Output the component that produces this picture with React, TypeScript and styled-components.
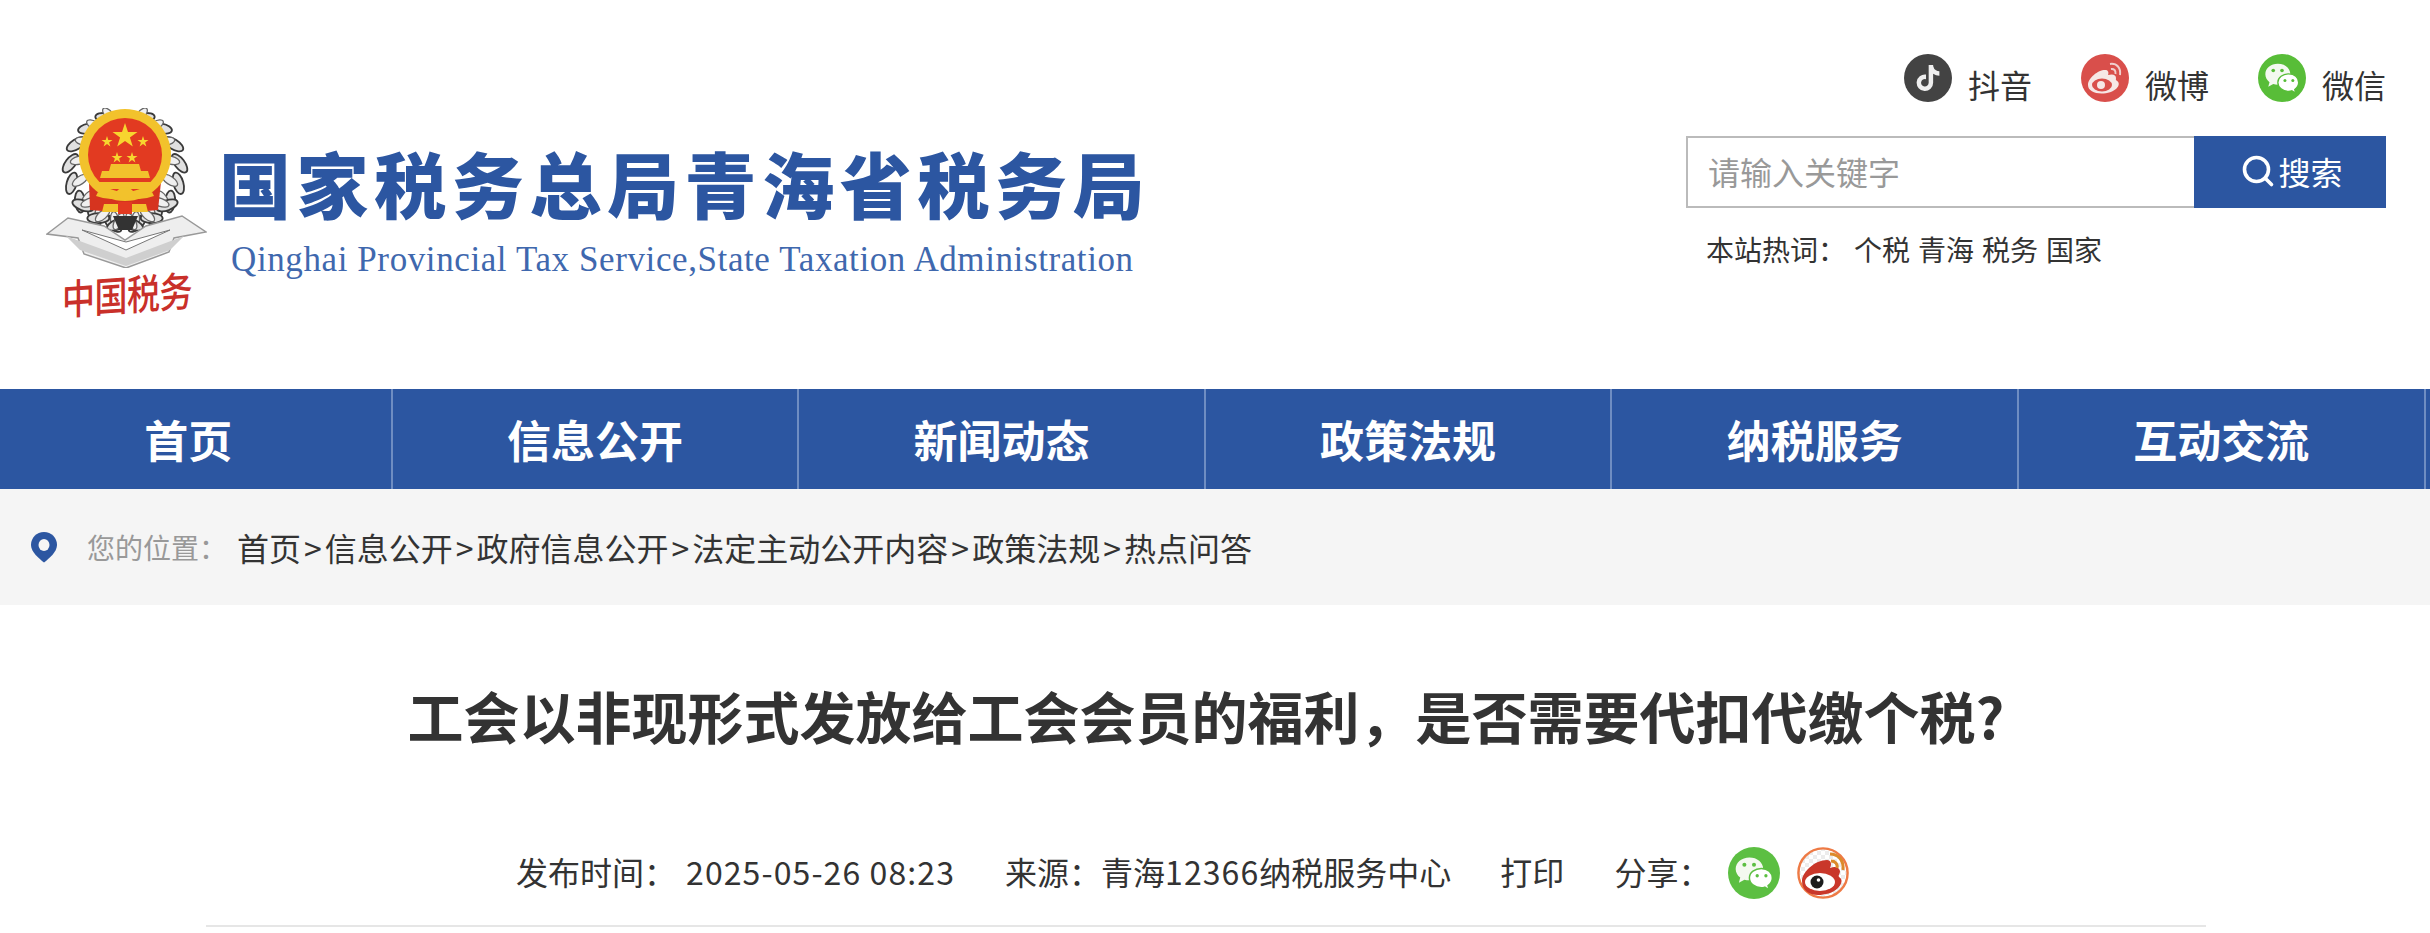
import styled, { createGlobalStyle } from 'styled-components';
import { Search } from 'lucide-react';
import { FaTiktok } from 'react-icons/fa';

const NAV = ['首页', '信息公开', '新闻动态', '政策法规', '纳税服务', '互动交流'];
const CRUMBS = ['首页', '信息公开', '政府信息公开', '法定主动公开内容', '政策法规', '热点问答'];
const HOT = ['个税', '青海', '税务', '国家'];

const GlobalStyle = createGlobalStyle`
  html, body { margin:0; padding:0; background:#fff; overflow:hidden; }
  body { font-family:"Noto Sans CJK SC","Liberation Sans",sans-serif; color:#333; }
  * { box-sizing:border-box; }
`;

const Header = styled.header`display:flex; justify-content:space-between; height:389px; padding:0 44px 0 46px;`;
const Logo = styled.div`display:flex; padding-top:108px;`;
const EmblemCol = styled.div`width:161px; display:flex; flex-direction:column; align-items:center;`;
const Slogan = styled.div`font-size:33px; line-height:50px; font-weight:500; color:#c9302a; white-space:nowrap; letter-spacing:-.5px; transform:skewY(-4deg) scaleY(1.25);`;
const LogoText = styled.div`margin-left:12px; padding-top:32px;`;
const LogoTitle = styled.div`font-size:72px; line-height:84px; font-weight:900; letter-spacing:5.6px; color:#2c56a1; white-space:nowrap;`;
const LogoEn = styled.div`margin:16px 0 0 12px; font-family:"Liberation Serif",serif; font-size:35px; line-height:40px; letter-spacing:.6px; color:#3f68ae; white-space:nowrap;`;

const Side = styled.div`width:700px; padding-top:54px;`;
const Socials = styled.div`display:flex; justify-content:flex-end; gap:49px; height:82px;`;
const Social = styled.a`display:flex; align-items:flex-start; gap:16px; font-size:32px; line-height:52px; color:#333; height:48px; span{margin-top:4px; display:block;}`;
const Round = styled.i<{ $bg: string; $fg?: string; $size?: number }>`
  width:${({ $size }) => $size ?? 48}px; height:${({ $size }) => $size ?? 48}px; border-radius:50%; flex:none;
  display:flex; align-items:center; justify-content:center; background:${({ $bg }) => $bg}; color:${({ $fg }) => $fg ?? '#eee'};
`;
const SearchBar = styled.form`display:flex; height:72px;`;
const SearchInput = styled.input`
  flex:1; min-width:0; height:72px; border:2px solid #bbb; border-right:0; padding:0 0 3px 20px; outline:0;
  font:32px "Noto Sans CJK SC",sans-serif; color:#333; &::placeholder{color:#999; opacity:1;}
`;
const SearchButton = styled.button`
  width:192px; height:72px; border:0; background:#2c56a1; color:#fff; padding:0 0 3px 3px;
  display:flex; align-items:center; justify-content:center; gap:2px; font:32px "Noto Sans CJK SC",sans-serif;
`;
const HotWords = styled.div`display:flex; margin:21px 0 0 20px; font-size:28px; line-height:40px; color:#333; gap:8px;`;
const HotLabel = styled.span`margin-right:0;`;

const Nav = styled.nav`display:flex; height:100px; background:#2c56a1; margin-left:-14px; overflow:hidden;`;
const NavItem = styled.a`
  flex:none; width:406.6px; border-right:2px solid #6f8dc2; display:flex; align-items:center; justify-content:center;
  color:#fff; font-size:44px; font-weight:700;
`;

const Crumbs = styled.div`display:flex; align-items:center; height:116px; background:#f5f5f5; padding:0 0 0 30px;`;
const CrumbLabel = styled.span`margin-left:29px; width:150px; font-size:28px; color:#999;`;
const CrumbPath = styled.span`font-size:32px; color:#333; white-space:nowrap;`;
const CrumbSep = styled.span`padding:0 3px;`;

const Article = styled.main`width:2000px; margin-left:206px;`;
const Title = styled.h1`margin:0; padding-top:70px; height:216px; text-align:center; font-size:56px; line-height:80px; font-weight:700; color:#333; white-space:nowrap;`;
const Meta = styled.div`
  display:flex; align-items:center; height:106px; border-bottom:2px solid #e6e6e6; padding-left:310px; padding-bottom:4px;
  font-size:32px; color:#333; white-space:nowrap;
`;
const MetaLabel = styled.span<{ $gap: number }>`margin-right:${({ $gap }) => $gap}px;`;
const Digits = styled.span`letter-spacing:1.1px;`;
const Shares = styled.div`display:flex; gap:17px; margin:4px 0 0 18px;`;

const WREATH = Array.from({ length: 11 }, (_, i) => i);

// 税徽：国徽 + 麦穗 + 绶带
const Emblem = () => (
  <svg width="161" height="160" viewBox="0 0 161 160">
    {WREATH.map((i) => {
      const deg = -70 + i * 21;
      const a = deg * (Math.PI / 180);
      const cx = 79 + 55 * Math.cos(a);
      const cy = 62 + 55 * Math.sin(a);
      const cx2 = 158 - cx;
      const ix = 79 + (cx - 79) * 0.84;
      const ix2 = 158 - ix;
      return (
        <g key={i}>
          <ellipse cx={cx} cy={cy} rx="11" ry="5" transform={`rotate(${deg + 60} ${cx} ${cy})`} fill="#e0e0e0" stroke="#3a3a3a" strokeWidth="1.8" />
          <ellipse cx={cx2} cy={cy} rx="11" ry="5" transform={`rotate(${-deg - 60} ${cx2} ${cy})`} fill="#e0e0e0" stroke="#3a3a3a" strokeWidth="1.8" />
          <ellipse cx={ix} cy={cy - 3} rx="9" ry="4" transform={`rotate(${deg + 20} ${ix} ${cy - 3})`} fill="#f0f0f0" stroke="#666" strokeWidth="1.3" />
          <ellipse cx={ix2} cy={cy - 3} rx="9" ry="4" transform={`rotate(${-deg - 20} ${ix2} ${cy - 3})`} fill="#f0f0f0" stroke="#666" strokeWidth="1.3" />
        </g>
      );
    })}
    <path d="M1 126 L22 110 L58 118 L79 132 L100 118 L136 108 L160 124 L128 130 L123 144 L80 160 L38 146 L32 130Z" fill="#eee" stroke="#999" strokeWidth="1.5" />
    <path d="M20 128 L80 150 L138 128 L124 142 L80 158 L34 142Z" fill="#cfcfcf" />
    <path d="M36 122 L80 142 L124 122 L80 134Z" fill="#fff" stroke="#777" strokeWidth="1" />
    <path d="M67 108 H92 L86 122 H73Z" fill="#333" />
    <path d="M43 74 H115 L112 102 L90 104 H68 L44 102Z" fill="#d6341f" />
    <circle cx="79" cy="47" r="46" fill="#f2c22c" />
    <circle cx="79" cy="47" r="37" fill="#e23a21" />
    <path d="M79 15 l3 9 h9.5 l-7.6 5.6 2.9 9 -7.8 -5.6 -7.8 5.6 2.9 -9 -7.6 -5.6 h9.5Z" fill="#f7d52f" />
    <path d="M61 28 l1.3 4 h4.2 l-3.4 2.5 1.3 4 -3.4 -2.5 -3.4 2.5 1.3 -4 -3.4 -2.5 h4.2Z M97 28 l1.3 4 h4.2 l-3.4 2.5 1.3 4 -3.4 -2.5 -3.4 2.5 1.3 -4 -3.4 -2.5 h4.2Z M71 44 l1.3 4 h4.2 l-3.4 2.5 1.3 4 -3.4 -2.5 -3.4 2.5 1.3 -4 -3.4 -2.5 h4.2Z M86 44 l1.3 4 h4.2 l-3.4 2.5 1.3 4 -3.4 -2.5 -3.4 2.5 1.3 -4 -3.4 -2.5 h4.2Z" fill="#f7d52f" />
    <path d="M65 56 H93 L95 63 H102 L104 70 H54 L56 63 H63Z" fill="#f2c22c" />
    <path d="M44 74 H114 L108 81 H50Z" fill="#f2c22c" />
    <path d="M52 84 Q66 90 70 84 Q79 74 88 84 Q92 90 106 84 L108 88 Q92 94 79 88 Q66 94 50 88Z" fill="#f2c22c" />
    <path d="M58 96 H100 L102 104 H56Z" fill="#f2c22c" />
    <rect x="72" y="94" width="14" height="12" fill="#e23a21" />
  </svg>
);

const WechatGlyph = ({ size }: { size: number }) => (
  <svg width={size} height={size} viewBox="0 0 48 48">
    <path d="M19 7C10.500 7 4 12.500 4 19.500c0 4 2 7 5 9.500l-1.500 5.500 6-3.200c1.800.5 3.500.7 5.500.7 8 0 15-5.300 15-12.500S27.500 7 19 7Z" fill="#f4f9f0" />
    <path d="M32 19c-7 0-13 4.500-13 10.500S25 40 32 40c1.400 0 2.600-.2 3.800-.6l4.700 2.900-1.200-4.500c2.700-1.900 4.700-4.800 4.700-8.300C44 23.500 39 19 32 19Z" fill="#fff" stroke="currentColor" strokeWidth="1.600" />
    <circle cx="13.500" cy="15" r="2.200" fill="currentColor" /><circle cx="24" cy="15" r="2.200" fill="currentColor" />
    <circle cx="27.500" cy="27" r="1.800" fill="currentColor" /><circle cx="37" cy="27" r="1.800" fill="currentColor" />
  </svg>
);

const WeiboSmall = () => (
  <svg width="48" height="48" viewBox="0 0 48 48">
    <path d="M7 31c0-7 10-15 17-15 3 0 4 2 3 5 5-1.500 8 0 8 3 0 1-.5 2 .5 2.500 3 1.500 3 5 0 8-3 3-9 5-15 5C13 39.500 7 36.500 7 31Z" fill="#f6e7e6" />
    <ellipse cx="21" cy="31" rx="10" ry="6.500" fill="#d94f4b" />
    <circle cx="20" cy="31" r="4" fill="#f6e7e6" />
    <path d="M29 10c7-1 11 4 10 11M30 15c3-.5 5 1.500 4.500 5" fill="none" stroke="#f0cfcd" strokeWidth="2" />
  </svg>
);

const WeiboShare = () => (
  <svg width="52" height="52" viewBox="0 0 52 52">
    <defs>
      <pattern id="grid" width="8" height="8" patternUnits="userSpaceOnUse">
        <rect width="4" height="4" fill="#ececec" /><rect x="4" y="4" width="4" height="4" fill="#ececec" />
      </pattern>
    </defs>
    <circle cx="26" cy="26" r="24.600" fill="#fff" />
    <circle cx="26" cy="26" r="24.600" fill="url(#grid)" stroke="#ee7a45" strokeWidth="2.400" />
    <path d="M5 34C5 25 18 13 30 13c4 0 5 4 3 8 5-2 9-1 10 3 0 3-2 4-1 6 4 2 3 7-1 11-5 5-13 7-20 7C12 48 5 43 5 34Z" fill="#c9372a" />
    <ellipse cx="23" cy="35" rx="15" ry="9" fill="#fff" />
    <circle cx="20" cy="35" r="6.500" fill="#1c1c1c" />
    <circle cx="21.500" cy="33" r="1.800" fill="#fff" />
    <path d="M33 7c8 0 14 6 13 16M34 14c4 0 7 3 6 7" fill="none" stroke="#dc8a2a" strokeWidth="3" />
  </svg>
);

export default function App() {
  return (
    <>
      <GlobalStyle />
      <Header>
        <Logo>
          <EmblemCol>
            <Emblem />
            <Slogan>中国税务</Slogan>
          </EmblemCol>
          <LogoText>
            <LogoTitle>国家税务总局青海省税务局</LogoTitle>
            <LogoEn>Qinghai Provincial Tax Service,State Taxation Administration</LogoEn>
          </LogoText>
        </Logo>
        <Side>
          <Socials>
            <Social><Round $bg="#434343"><FaTiktok size={26} /></Round><span>抖音</span></Social>
            <Social><Round $bg="#d94f4b"><WeiboSmall /></Round><span>微博</span></Social>
            <Social><Round $bg="#58bd38" $fg="#58bd38"><WechatGlyph size={40} /></Round><span>微信</span></Social>
          </Socials>
          <SearchBar>
            <SearchInput placeholder="请输入关键字" readOnly />
            <SearchButton type="button"><Search size={36} strokeWidth={2.4} />搜索</SearchButton>
          </SearchBar>
          <HotWords>
            <HotLabel>本站热词：</HotLabel>
            {HOT.map((w) => <span key={w}>{w}</span>)}
          </HotWords>
        </Side>
      </Header>

      <Nav>
        {NAV.map((n) => <NavItem key={n}>{n}</NavItem>)}
      </Nav>

      <Crumbs>
        <svg width="28" height="32" viewBox="0 0 28 32">
          <path d="M14 1C6.500 1 1 6.800 1 14c0 7 8 13.500 13 17.500C19 27.500 27 21 27 14 27 6.800 21.500 1 14 1Z" fill="#2c56a1" />
          <ellipse cx="14" cy="14" rx="5.500" ry="6" fill="#f5f5f5" />
        </svg>
        <CrumbLabel>您的位置：</CrumbLabel>
        <CrumbPath>
          {CRUMBS.map((c, i) => (
            <span key={c}>{i > 0 && <CrumbSep>&gt;</CrumbSep>}{c}</span>
          ))}
        </CrumbPath>
      </Crumbs>

      <Article>
        <Title>工会以非现形式发放给工会会员的福利，是否需要代扣代缴个税?</Title>
        <Meta>
          <MetaLabel $gap={10}>发布时间：</MetaLabel>
          <MetaLabel $gap={50}><Digits>2025-05-26 08:23</Digits></MetaLabel>
          <MetaLabel $gap={49}>来源：青海<Digits>12366</Digits>纳税服务中心</MetaLabel>
          <MetaLabel $gap={50}>打印</MetaLabel>
          <span>分享：</span>
          <Shares>
            <Round $bg="#5cbf42" $fg="#5cbf42" $size={52}><WechatGlyph size={44} /></Round>
            <WeiboShare />
          </Shares>
        </Meta>
      </Article>
    </>
  );
}
